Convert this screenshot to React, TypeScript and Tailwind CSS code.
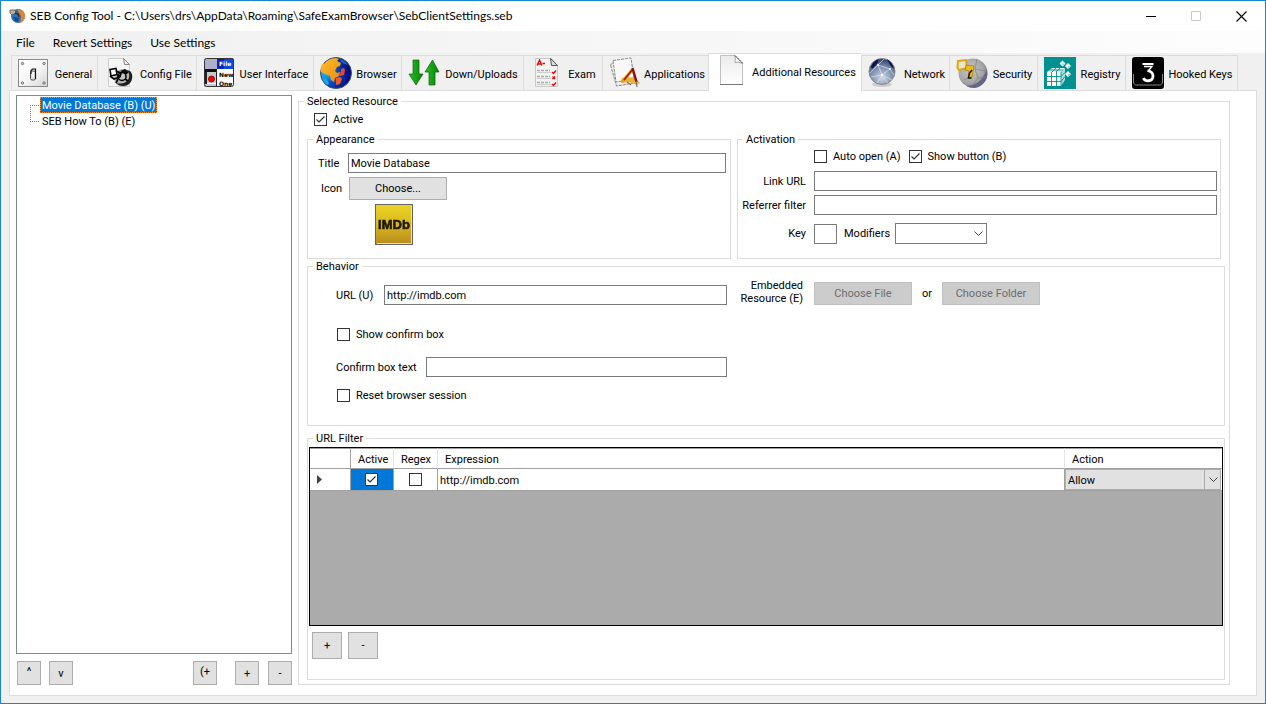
import { useState } from 'react';
import type { ReactNode } from 'react';
import clsx from 'clsx';

type Tab = { label: string; icon: ReactNode; width: string };

function GeneralIcon() {
  return (
    <svg viewBox="0 0 32 32" className="size-8 shrink-0">
      <defs>
        <linearGradient id="plate" x1="0" y1="0" x2="1" y2="1">
          <stop offset="0" stopColor="#ffffff" />
          <stop offset="0.5" stopColor="#f6f6f6" />
          <stop offset="1" stopColor="#d6d6d6" />
        </linearGradient>
      </defs>
      <rect x="0.500" y="2.500" width="29" height="27" fill="url(#plate)" stroke="#8a8a8a" />
      <g fill="#ccc" stroke="#666" strokeWidth="0.800">
        <circle cx="4.500" cy="6.500" r="1.200" />
        <circle cx="26" cy="6.500" r="1.200" />
        <circle cx="4.500" cy="26" r="1.200" />
        <circle cx="26" cy="26" r="1.200" />
      </g>
      <rect x="12.500" y="14" width="5" height="9" rx="1.500" fill="#ddd" stroke="#555" />
      <path d="M13 17v-3.500l1.500-1.500h3v10" fill="none" stroke="#111" strokeWidth="1.200" />
      <path d="M15 15v5" stroke="#fff" strokeWidth="1.500" />
    </svg>
  );
}

function ConfigIcon() {
  return (
    <svg viewBox="0 0 32 32" className="size-8 shrink-0">
      <path d="M4.500 1.500h15l6 6v22h-21z" fill="#f6f6f6" stroke="#cfcfcf" />
      <path d="M19.500 1.500l1 6h5z" fill="#eee" stroke="#888" />
      <circle cx="19" cy="21" r="9" fill="#b4b4b4" />
      <path d="M12 26c4 4 10 4 14 0 3-4 3-9 0-12l-3-1c3 4 3 8 0 11-3 3-7 3-11 2z" fill="#1c1c1c" />
      <path d="M16 14l5-2 3 2-2 3z" fill="#111" />
      <circle cx="18" cy="19.500" r="4" fill="#c4c4c4" stroke="#000" strokeWidth="1.500" />
      <path d="M6 12.500l6-1 1 6-6 1.500z" fill="#fff" stroke="#000" strokeWidth="1.600" />
      <path
        d="M12 14l5 2-1 4M6 19l4 3 6-2M14 22l-2 4M21 22l3 2M21 17l3-2M13 19l4-1"
        fill="none"
        stroke="#000"
        strokeWidth="1.700"
      />
    </svg>
  );
}

function InterfaceIcon() {
  return (
    <svg viewBox="0 0 32 32" className="size-8 shrink-0">
      <clipPath id="ui-frame">
        <rect x="1" y="1" width="30" height="29" rx="2" />
      </clipPath>
      <g clipPath="url(#ui-frame)">
        <rect width="32" height="32" fill="#fff" />
        <rect width="15" height="12" fill="#aeb0ca" />
        <rect x="14" width="18" height="12" fill="#0a4be0" />
        <rect x="14" width="7" height="12" fill="#0628b8" />
        <rect y="12" width="14" height="3" fill="#111" />
        <rect y="15" width="4" height="17" fill="#222" />
        <rect x="4" y="15" width="10" height="11" fill="#c9c9c9" />
        <rect y="27" width="14" height="5" fill="#c4c5da" />
        <rect x="13" y="12" width="1" height="20" fill="#222" />
        <circle cx="8.500" cy="22" r="3" fill="#f00" stroke="#700" strokeWidth="0.800" />
      </g>
      <rect x="1.500" y="1.500" width="29" height="28" rx="2" fill="none" stroke="#333" />
      <g fontFamily="DejaVu Sans" fontWeight="bold" fontSize="6">
        <text x="16" y="9" fill="#fff">File</text>
        <text x="16" y="20" fill="#000">New</text>
        <text x="16" y="29" fill="#000">One</text>
      </g>
    </svg>
  );
}

function BrowserIcon() {
  return (
    <svg viewBox="0 0 32 32" className="size-8 shrink-0">
      <defs>
        <radialGradient id="sea" cx="0.15" cy="0.5" r="0.8">
          <stop offset="0" stopColor="#1cc0f0" />
          <stop offset="0.45" stopColor="#0a4fc8" />
          <stop offset="1" stopColor="#00087a" />
        </radialGradient>
        <linearGradient id="land" x1="0" y1="0" x2="1" y2="1">
          <stop offset="0" stopColor="#ffc02a" />
          <stop offset="1" stopColor="#e88a10" />
        </linearGradient>
      </defs>
      <circle cx="16" cy="16" r="15.500" fill="url(#sea)" stroke="#456" />
      <path
        d="M4 7c3-4 7-6 12-6l3 1-2 2 4 2-1 3-3 1-2 4 2 2 3-1-1 4-4 2-1 4-3-2-1-4-5-2-4-2c-1-3 0-6 1-8z"
        fill="url(#land)"
      />
      <path d="M2 20l5 2 2 5-2 1c-3-2-4-5-5-8z" fill="#18a6dd" />
      <path d="M21 12l3-1 1 2-1 5-4 1-2-2 3-2z" fill="#e34a2a" />
      <path d="M16 21l4-1 2 2-2 5-4 1z" fill="#ee5a22" />
      <path d="M20 2c3 1 6 3 8 6l-3-1-4-2z" fill="#1668d8" />
    </svg>
  );
}

function TransferIcon() {
  return (
    <svg viewBox="0 0 32 32" className="size-8 shrink-0">
      <defs>
        <linearGradient id="arrow">
          <stop offset="0" stopColor="#22c522" />
          <stop offset="1" stopColor="#0a7d0a" />
        </linearGradient>
      </defs>
      <path d="M5 3h6v14h4L8 28 1 17h4z" fill="url(#arrow)" stroke="#086008" strokeWidth="0.700" />
      <path d="M21 28V15h-4l7.500-12L31 15h-4v13z" fill="url(#arrow)" stroke="#086008" strokeWidth="0.700" />
    </svg>
  );
}

function ExamIcon() {
  return (
    <svg viewBox="0 0 32 32" className="size-8 shrink-0">
      <path d="M5.500 1.500h16l6 7v21h-22z" fill="#f4f4f4" stroke="#c9c9c9" />
      <path d="M20.500 1.500l1 7h6z" fill="#ddd" stroke="#555" />
      <path d="M7 8.500L9.500 3 12 8.500M8 7h3M12.500 6.500h2.500" fill="none" stroke="#e00" strokeWidth="1.300" />
      <path d="M7 13.500h13M7 19.500h13M7 25.500h13" stroke="#aaa" strokeWidth="1.500" strokeDasharray="3 1" />
      <path d="M7 15.500h14M7 21.500h14M7 27.500h14" stroke="#ccc" />
      <path d="M22 15l1.500 1.500 2.500-3M22 27l1.500 1.500 2.500-3" fill="none" stroke="#e00" strokeWidth="1.400" />
      <path d="M22.500 19.500l2.500 2.500m0-2.500l-2.500 2.500" stroke="#e00" strokeWidth="1.300" />
    </svg>
  );
}

function ApplicationsIcon() {
  return (
    <svg viewBox="0 0 32 32" className="size-8 shrink-0">
      <path d="M1.500 8l4-4 17 2 3 20-18 3z" fill="#ececec" stroke="#888" strokeDasharray="3 1" />
      <path d="M4 3.500l18-2.500 3 21-18 3z" fill="#f8f8f8" stroke="#888" strokeDasharray="3 1" />
      <path d="M13 21l12-1 6 6-3 2-8-3-8 1z" fill="#eeb236" />
      <path d="M24 12l-11 13" stroke="#e0a020" strokeWidth="3" />
      <path d="M24 12l-9 11" stroke="#b01a10" strokeWidth="1.800" />
      <path d="M23.500 11l4 14" stroke="#8e1010" strokeWidth="2.500" />
      <path d="M18 25l4 3M27 24l1 6" stroke="#777" strokeWidth="1.300" />
    </svg>
  );
}

function PageIcon() {
  return (
    <svg viewBox="0 0 32 32" className="size-8 shrink-0">
      <defs>
        <linearGradient id="sheet" x1="0" y1="0" x2="0" y2="1">
          <stop offset="0" stopColor="#ebebeb" />
          <stop offset="1" stopColor="#ffffff" />
        </linearGradient>
      </defs>
      <path d="M5.500.5v29h22V8L20 .5z" fill="url(#sheet)" stroke="#c0c0c0" />
      <path d="M5 29.500h23" stroke="#777" />
      <path d="M19.500.5c1 2 1 4 .5 7 3-.5 5 0 7.500 1z" fill="#f8f8f8" stroke="#aaa" />
      <path d="M20 .5l8 8" stroke="#444" strokeDasharray="2 1" />
    </svg>
  );
}

function NetworkIcon() {
  return (
    <svg viewBox="0 0 32 32" className="size-8 shrink-0">
      <defs>
        <radialGradient id="net" cx="0.5" cy="0.75" r="0.75">
          <stop offset="0" stopColor="#ccd5e2" />
          <stop offset="0.6" stopColor="#7a8dad" />
          <stop offset="1" stopColor="#26385f" />
        </radialGradient>
      </defs>
      <ellipse cx="14" cy="27.500" rx="10" ry="2.500" fill="#ccc" />
      <circle cx="14" cy="14.500" r="13" fill="url(#net)" stroke="#888" />
      <path d="M3 10c2-5 5-7 8-8l-2 5-5 5zM19 2c3 2 6 5 7 10l-4-4z" fill="#0b1356" />
      <path
        d="M2 16L10 8l12 4 4 6M10 8l4 10 8-6M3 20l11-2 10 5M14 18l-5 8M14 18l6 8M10 8l6-6"
        fill="none"
        stroke="#e4eaf4"
        strokeWidth="0.600"
      />
      <circle cx="10" cy="8" r="1" fill="#fff" />
      <circle cx="14" cy="18" r="1.200" fill="#fff" />
      <circle cx="22" cy="12" r="1" fill="#fff" />
    </svg>
  );
}

function SecurityIcon() {
  return (
    <svg viewBox="0 0 32 32" className="size-8 shrink-0">
      <defs>
        <radialGradient id="ball" cx="0.4" cy="0.4" r="0.65">
          <stop offset="0" stopColor="#c8c8c8" />
          <stop offset="0.7" stopColor="#a4a4a4" />
          <stop offset="1" stopColor="#777" />
        </radialGradient>
      </defs>
      <circle cx="17" cy="16" r="14.500" fill="url(#ball)" />
      <path d="M30.500 12c3 9-3 18-12 19-4 0-6-1-8-2 9 0 17-6 20-17z" fill="#65658a" />
      <path d="M21 2l-2 10 10 2M19 12l3 9-6 8M22 21l8-1M8 23l6-3" fill="none" stroke="#808080" strokeWidth="0.700" />
      <path d="M2 4l8-1 1 8-8 2-1.500-2z" fill="#e9e5d2" stroke="#d9a70e" strokeWidth="2" />
      <path d="M10 8l8 1-1 6-1 5-4 1 1-7-4-1z" fill="#edbb16" stroke="#775808" strokeWidth="0.500" />
      <path d="M16 13l-2.500 3-1 5h3" fill="none" stroke="#111" strokeWidth="1.400" />
    </svg>
  );
}

function RegistryIcon() {
  return (
    <svg viewBox="0 0 32 32" className="size-8 shrink-0">
      <rect width="32" height="32" fill="#009090" />
      <path d="M3 15l5-4h13l-4 4z" fill="#d5f2f2" />
      <path d="M17 15l4-4v12l-4 6z" fill="#a6dcdc" />
      <path d="M3 15h14v14H3z" fill="#fff" />
      <path
        d="M7.500 15v14M12.500 15v14M3 19.500h14M3 24.500h14M17 15v14M17 19.500l4-4M17 24.500l4-5M5.500 13h13M12 11l-4 4M16 11l-4 4"
        fill="none"
        stroke="#009090"
        strokeWidth="0.900"
      />
      <path d="M18.500 3.500l3 3-3 3-3-3zM24 6l3 3-3 3-3-3zM24 14l3 3-3 3-3-3z" fill="#fff" />
      <path d="M18.500 6.500h3l-3 3zM24 9h3l-3 3zM24 17h3l-3 3z" fill="#9adada" />
    </svg>
  );
}

function HookIcon() {
  return (
    <svg viewBox="0 0 32 32" className="size-8 shrink-0">
      <rect width="32" height="32" rx="3" fill="#000" />
      <path d="M1.500 17v9l2 2h25l2-2v-9" fill="none" stroke="#aaa" strokeWidth="0.800" />
      <path d="M10.500 7h11" stroke="#fff" strokeWidth="2" />
      <path d="M12 9.500h8l-3 3.500" fill="none" stroke="#fff" strokeWidth="1.300" />
      <path
        d="M15.500 13.500c4 1 5.500 3 5.500 5.500 0 6-8 6-9.500 2"
        fill="none"
        stroke="#fff"
        strokeWidth="2.800"
      />
    </svg>
  );
}

function AppIcon() {
  return (
    <svg viewBox="0 0 16 16" className="size-4">
      <circle cx="9" cy="8" r="7" fill="#2b74b8" />
      <path d="M9 1c4 0 7 3 7 7s-3 7-6 7c3-2 1-4 2-6s-3-3-3-8z" fill="#e8812c" />
      <path d="M4 9l6 1-1 4-3-1z" fill="#174a86" />
      <path d="M1 2h5l1 3-4 2-2-2z" fill="#b8b0a8" stroke="#555" strokeWidth="0.800" />
      <path d="M6 5l3 1 1 3" fill="none" stroke="#3b2a20" strokeWidth="1.500" />
    </svg>
  );
}

function MovieIcon() {
  return (
    <svg viewBox="0 0 38 41" className="h-[41px] w-[38px]">
      <defs>
        <linearGradient id="gold" x1="0" y1="0" x2="0" y2="1">
          <stop offset="0" stopColor="#ead424" />
          <stop offset="0.5" stopColor="#d9b81f" />
          <stop offset="1" stopColor="#b78a1c" />
        </linearGradient>
        <filter id="soft">
          <feGaussianBlur stdDeviation="0.7" />
        </filter>
      </defs>
      <rect x="0.500" y="0.500" width="37" height="40" fill="url(#gold)" stroke="#646464" />
      <path d="M36.500 2v37.500H2" fill="none" stroke="#f0dfa0" />
      <text
        x="19"
        y="25"
        textAnchor="middle"
        fontFamily="Liberation Sans"
        fontWeight="bold"
        fontSize="13"
        stroke="#1c1800"
        strokeWidth="0.600"
        fill="#1c1800"
        filter="url(#soft)"
      >
        IMDb
      </text>
    </svg>
  );
}

const tabs: Tab[] = [
  { label: 'General', icon: <GeneralIcon />, width: 'w-[86px]' },
  { label: 'Config File', icon: <ConfigIcon />, width: 'w-[99px]' },
  { label: 'User Interface', icon: <InterfaceIcon />, width: 'w-[117px]' },
  { label: 'Browser', icon: <BrowserIcon />, width: 'w-[88px]' },
  { label: 'Down/Uploads', icon: <TransferIcon />, width: 'w-[122px]' },
  { label: 'Exam', icon: <ExamIcon />, width: 'w-[79px]' },
  { label: 'Applications', icon: <ApplicationsIcon />, width: 'w-[106px]' },
  { label: 'Additional Resources', icon: <PageIcon />, width: 'w-[153px]' },
  { label: 'Network', icon: <NetworkIcon />, width: 'w-[88px]' },
  { label: 'Security', icon: <SecurityIcon />, width: 'w-[88px]' },
  { label: 'Registry', icon: <RegistryIcon />, width: 'w-[88px]' },
  { label: 'Hooked Keys', icon: <HookIcon />, width: 'w-[113px]' },
];

const resources = ['Movie Database (B) (U)', 'SEB How To (B) (E)'];

const inputClass = 'h-5 min-w-0 border border-[#7a7a7a] bg-white px-0.5 outline-none';

function Group({
  title,
  className,
  bodyClassName,
  children,
}: {
  title: string;
  className?: string;
  bodyClassName?: string;
  children: ReactNode;
}) {
  return (
    <fieldset className={clsx('min-w-0 border border-[#dcdcdc]', className)}>
      <legend className="ml-[5px] px-[3px] leading-[13px]">{title}</legend>
      <div className={bodyClassName}>{children}</div>
    </fieldset>
  );
}

function CheckBox({
  label,
  hiddenLabel,
  defaultChecked,
}: {
  label: string;
  hiddenLabel?: boolean;
  defaultChecked?: boolean;
}) {
  return (
    <label className="flex h-[13px] items-center gap-1.5">
      <span className="relative block size-[13px]">
        <input
          type="checkbox"
          defaultChecked={defaultChecked}
          aria-label={hiddenLabel ? label : undefined}
          className="peer block size-[13px] appearance-none border border-[#333] bg-white"
        />
        <svg
          viewBox="0 0 13 13"
          className="pointer-events-none absolute inset-0 hidden peer-checked:block"
        >
          <path d="M2.500 6.500L5 9l5.500-5.500" fill="none" stroke="#333" strokeWidth="1.200" />
        </svg>
      </span>
      {!hiddenLabel && <span>{label}</span>}
    </label>
  );
}

function Button({
  children,
  className,
  disabled,
}: {
  children: ReactNode;
  className: string;
  disabled?: boolean;
}) {
  return (
    <button
      type="button"
      disabled={disabled}
      className={clsx(
        'shrink-0 border',
        disabled
          ? 'border-[#bfbfbf] bg-[#cccccc] text-[#6d6d6d]'
          : 'border-[#adadad] bg-[#e1e1e1]',
        className
      )}
    >
      {children}
    </button>
  );
}

function Chevron() {
  return (
    <svg viewBox="0 0 9 6" className="h-1.5 w-[9px]">
      <path d="M.5.5l4 4 4-4" fill="none" stroke="#444" />
    </svg>
  );
}

function TitleBar() {
  return (
    <header className="flex h-[30px] items-center bg-white pl-2 font-['Lato',sans-serif] text-xs">
      <AppIcon />
      <h1 className="ml-[5px] flex-1 whitespace-nowrap">
        SEB Config Tool - C:\Users\drs\AppData\Roaming\SafeExamBrowser\SebClientSettings.seb
      </h1>
      <div className="flex h-full pr-px">
        <button type="button" aria-label="Minimize" className="grid w-[45px] place-items-center">
          <svg viewBox="0 0 11 11" className="size-[11px]">
            <path d="M0 5.500h10" stroke="#000" />
          </svg>
        </button>
        <button type="button" aria-label="Maximize" className="grid w-[45px] place-items-center">
          <svg viewBox="0 0 11 11" className="size-[11px]">
            <path d="M.5.5h9v9h-9z" fill="none" stroke="#ccc" />
          </svg>
        </button>
        <button type="button" aria-label="Close" className="grid w-[45px] place-items-center">
          <svg viewBox="0 0 11 11" className="size-[11px]">
            <path d="M.5.5l10 10m0-10l-10 10" stroke="#000" strokeWidth="1.100" />
          </svg>
        </button>
      </div>
    </header>
  );
}

function MenuBar() {
  return (
    <nav className="flex h-[22px] items-center gap-[18px] bg-linear-to-r from-[#f0f0f0] to-[#fdfdfd] pt-0.5 pl-[15px] font-['Lato',sans-serif] text-xs">
      <button type="button">File</button>
      <button type="button">Revert Settings</button>
      <button type="button">Use Settings</button>
    </nav>
  );
}

function TabStrip() {
  const [active, setActive] = useState('Additional Resources');

  return (
    <div role="tablist" className="relative z-10 -mb-px flex items-end pl-[2px]">
      {tabs.map((tab, i) => {
        const selected = tab.label === active;
        return (
          <button
            key={tab.label}
            type="button"
            role="tab"
            aria-selected={selected}
            onClick={() => setActive(tab.label)}
            className={clsx(
              'flex items-start border-t border-l border-[#dcdcdc] pt-px pl-1.5 text-left',
              i === tabs.length - 1 && 'border-r',
              selected ? 'h-[38px] bg-white' : 'h-9 border-b bg-[#f0f0f0]',
              tab.width
            )}
          >
            {tab.icon}
            <span className="h-8 flex-1 pt-px text-center leading-[34px] whitespace-nowrap">
              {tab.label}
            </span>
          </button>
        );
      })}
    </div>
  );
}

function ResourceTree() {
  const [selected, setSelected] = useState(resources[0]);

  return (
    <aside className="flex w-[276px] shrink-0 flex-col">
      <ul className="flex-1 border border-[#828790] py-px pl-[13px]">
        {resources.map((name, i) => (
          <li key={name} className="flex h-4 items-center">
            <svg viewBox="0 0 10 16" className="h-4 w-2.5" shapeRendering="crispEdges">
              <path
                d={i === 0 ? 'M0 8.500h10M.5 8v8' : 'M0 8.500h10M.5 0v8'}
                fill="none"
                stroke="#808080"
                strokeDasharray="1 1"
              />
            </svg>
            <button
              type="button"
              onClick={() => setSelected(name)}
              className={clsx(
                'h-4 border px-px leading-4',
                name === selected
                  ? 'border-dotted border-[#ff8728] bg-[#0078d7] text-white'
                  : 'border-transparent'
              )}
            >
              {name}
            </button>
          </li>
        ))}
      </ul>
      <div className="mt-[7px] flex pl-px">
        <Button className="size-6 pb-1">^</Button>
        <Button className="ml-2 size-6">v</Button>
        <Button className="ml-auto size-6 pb-1">(+</Button>
        <Button className="ml-[18px] size-6">+</Button>
        <Button className="ml-[9px] size-6">-</Button>
      </div>
    </aside>
  );
}

function Appearance() {
  return (
    <Group title="Appearance" bodyClassName="pr-1 pb-[13px] pl-2.5">
      <div className="mt-[7px] flex items-center">
        <label htmlFor="title" className="w-[30px]">
          Title
        </label>
        <input id="title" defaultValue="Movie Database" className={clsx(inputClass, 'flex-1')} />
      </div>
      <div className="mt-1 flex items-center">
        <span className="w-[31px] pl-[3px]">Icon</span>
        <Button className="h-[23px] w-[98px]">Choose...</Button>
      </div>
      <div className="mt-1 pl-[57px]">
        <MovieIcon />
      </div>
    </Group>
  );
}

function Activation() {
  return (
    <Group title="Activation" bodyClassName="pr-[3px]">
      <div className="mt-1 flex gap-2 pl-[76px]">
        <CheckBox label="Auto open (A)" />
        <CheckBox label="Show button (B)" defaultChecked />
      </div>
      <div className="mt-2 flex items-center">
        <label htmlFor="link-url" className="w-[76px] pr-2 text-right">
          Link URL
        </label>
        <input id="link-url" className={clsx(inputClass, 'flex-1')} />
      </div>
      <div className="mt-1 flex items-center">
        <label htmlFor="referrer" className="w-[76px] pr-2 text-right">
          Referrer filter
        </label>
        <input id="referrer" className={clsx(inputClass, 'flex-1')} />
      </div>
      <div className="mt-2 flex items-center">
        <label htmlFor="key" className="w-[76px] pr-2 text-right">
          Key
        </label>
        <input id="key" className={clsx(inputClass, 'w-[23px]')} />
        <label htmlFor="modifiers" className="w-[58px] pl-[7px]">
          Modifiers
        </label>
        <div className="relative">
          <select
            id="modifiers"
            defaultValue=""
            className="block h-[21px] w-[92px] appearance-none border border-[#7a7a7a] bg-white px-0.5"
          >
            <option value="" />
            <option>Alt</option>
            <option>Control</option>
            <option>Shift</option>
          </select>
          <span className="pointer-events-none absolute inset-y-0 right-1 flex items-center">
            <Chevron />
          </span>
        </div>
      </div>
    </Group>
  );
}

function Behavior() {
  return (
    <Group
      title="Behavior"
      className="mt-px"
      bodyClassName="grid grid-cols-[419fr_497fr] pb-[23px]"
    >
      <div className="pt-3 pl-7">
        <div className="flex items-center">
          <label htmlFor="url" className="w-12">
            URL (U)
          </label>
          <input id="url" defaultValue="http://imdb.com" className={clsx(inputClass, 'flex-1')} />
        </div>
        <div className="mt-[23px] pl-px">
          <CheckBox label="Show confirm box" />
        </div>
        <div className="mt-4 flex items-center">
          <label htmlFor="confirm" className="w-[90px]">
            Confirm box text
          </label>
          <input id="confirm" className={clsx(inputClass, 'flex-1')} />
        </div>
        <div className="mt-3 pl-px">
          <CheckBox label="Reset browser session" />
        </div>
      </div>
      <div className="flex items-start pt-1.5">
        <p className="w-[76px] text-right leading-[13px]">
          Embedded
          <br />
          Resource (E)
        </p>
        <Button disabled className="mt-[3px] ml-[11px] h-[23px] w-[98px]">
          Choose File
        </Button>
        <span className="mt-[3px] w-[30px] text-center leading-[23px]">or</span>
        <Button disabled className="mt-[3px] h-[23px] w-[98px]">
          Choose Folder
        </Button>
      </div>
    </Group>
  );
}

function UrlFilter() {
  return (
    <Group
      title="URL Filter"
      className="mt-1.5 flex flex-1 flex-col"
      bodyClassName="flex flex-1 flex-col px-px pb-5"
    >
      <div className="mt-0.5 flex-1 border border-black bg-[#ababab]">
        <table className="w-full table-fixed border-separate border-spacing-0 bg-white text-left">
          <thead>
            <tr className="h-[21px] *:border-t *:border-b *:border-t-[#a0a0a0] *:border-b-[#a0a0a0] *:p-0 *:pt-px *:pl-[7px] *:font-normal">
              <th className="w-[41px] border-r border-r-[#a0a0a0]" aria-label="Row" />
              <th className="w-[43px] border-r border-r-[#e5e5e5]">Active</th>
              <th className="w-11 border-r border-r-[#e5e5e5]">Regex</th>
              <th className="border-r border-r-[#e5e5e5]">Expression</th>
              <th className="w-[157px]">Action</th>
            </tr>
          </thead>
          <tbody>
            <tr className="h-[22px] *:border-b *:border-[#a0a0a0] *:p-0">
              <td className="border-r">
                <svg viewBox="0 0 5 9" className="ml-[7px] h-[9px] w-[5px]">
                  <path d="M0 0l5 4.500L0 9z" fill="#444" />
                </svg>
              </td>
              <td className="border-r bg-[#0078d7]">
                <div className="flex justify-center pr-px">
                  <CheckBox label="Active" hiddenLabel defaultChecked />
                </div>
              </td>
              <td className="border-r">
                <div className="flex justify-center">
                  <CheckBox label="Regex" hiddenLabel />
                </div>
              </td>
              <td className="border-r">
                <input
                  aria-label="Expression"
                  defaultValue="http://imdb.com"
                  className="block h-[21px] w-full px-0.5 pt-px outline-none"
                />
              </td>
              <td>
                <div className="relative pr-px">
                  <select
                    aria-label="Action"
                    className="block h-[21px] w-full appearance-none border border-[#adadad] bg-[#e1e1e1] px-0.5 pt-px"
                  >
                    <option>Allow</option>
                    <option>Block</option>
                  </select>
                  <span className="pointer-events-none absolute inset-y-0 right-px flex w-[17px] items-center justify-center border-l border-[#adadad]">
                    <Chevron />
                  </span>
                </div>
              </td>
            </tr>
          </tbody>
        </table>
      </div>
      <div className="mt-1.5 flex gap-1.5 pl-[3px]">
        <Button className="h-[27px] w-[30px]">+</Button>
        <Button className="h-[27px] w-[30px]">-</Button>
      </div>
    </Group>
  );
}

export default function App() {
  return (
    <div className="flex min-h-screen flex-col border border-[#1883d7] bg-[#f0f0f0] font-['Roboto',sans-serif] text-[11px] leading-[13px] text-black">
      <TitleBar />
      <MenuBar />
      <div className="flex flex-1 flex-col px-2 pb-[7px]">
        <TabStrip />
        <main className="flex flex-1 gap-1.5 border border-[#dcdcdc] bg-white pt-1 pr-[26px] pb-2.5 pl-1.5">
          <ResourceTree />
          <Group
            title="Selected Resource"
            className="flex flex-1 flex-col"
            bodyClassName="flex flex-1 flex-col pr-1 pb-1 pl-2"
          >
            <div className="mt-[5px] pl-[7px]">
              <CheckBox label="Active" defaultChecked />
            </div>
            <div className="mt-[7px] grid grid-cols-[424fr_484fr] gap-1.5 pr-1">
              <Appearance />
              <Activation />
            </div>
            <Behavior />
            <UrlFilter />
          </Group>
        </main>
      </div>
    </div>
  );
}
